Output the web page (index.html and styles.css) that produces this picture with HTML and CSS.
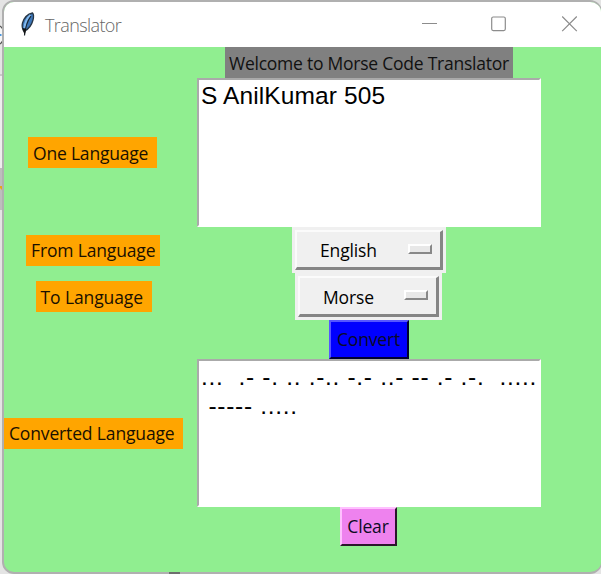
FILE: index.html
```html
<!DOCTYPE html>
<html lang="en">
<head>
<meta charset="utf-8">
<title>Translator</title>
<link rel="stylesheet" href="styles.css">
</head>
<body>
<svg class="backdrop" width="601" height="574" viewBox="0 0 601 574" aria-hidden="true">
  <path d="M0 75h4" stroke="#c8c8c8" stroke-width="2"/>
  <path d="M0 76h4v92h-4z" fill="#eee"/>
  <path d="M0 168h4v42h-4z" fill="#bdbdbd"/>
  <path d="M0 26q4 3 4 9t-4 9" fill="#f7f7f7" stroke="#555" stroke-width="1.3"/>
  <path d="M0 35h1.5" stroke="#1479d7" stroke-width="1.5"/>
  <path d="M0 186h4v10q-1-6-4-8z" fill="#e6a817"/>
</svg>
<div class="window">
  <header class="titlebar">
    <svg class="feather" width="16" height="25" viewBox="0 0 16 25">
      <path d="M12.5 1C8 2 4 6 2.500 11c-.8 3-.6 5.500 1.500 8.500C9 17 12 12 13 8c.8-3 .8-5.500-.5-7z" fill="#3d77b9" stroke="#273545" stroke-width="1.300"/>
      <path d="M10.500 3C7 6 5 11 4.500 16" fill="none" stroke="#83b9ee" stroke-width="2"/>
      <path d="M11 4C8 8 5.500 13 4.500 23.500" fill="none" stroke="#1c2630" stroke-width="1.200"/>
      <path d="M2.500 16l4 1-2 6z" fill="#161616"/>
    </svg>
    <span class="title">Translator</span>
    <svg class="controls" width="157" height="16" viewBox="0 0 157 16" fill="none" stroke="#8c8c8c" stroke-width="1.200">
      <path d="M0 7.500h15"/>
      <rect x="69.700" y="1" width="13.600" height="13.600" rx="1.500"/>
      <path d="M140.200.500l14.600 14.600M154.800.500l-14.600 14.600"/>
    </svg>
  </header>
  <main class="form">
    <h1 class="label heading">Welcome to Morse Code Translator</h1>
    <div class="label l-one">One Language</div>
    <div class="textbox"><div class="source">S AnilKumar 505</div></div>
    <div class="label l-from">From Language</div>
    <div class="option o-from"><div class="option-face"><span>English</span><i class="indicator"></i></div></div>
    <div class="label l-to">To Language</div>
    <div class="option o-to"><div class="option-face"><span>Morse</span><i class="indicator"></i></div></div>
    <button class="button convert">Convert</button>
    <div class="label l-converted">Converted Language</div>
    <div class="textbox"><div class="morse">...  .- -. .. .-.. -.- ..- -- .- .-.  .....
 ----- .....</div></div>
    <button class="button clear">Clear</button>
  </main>
</div>
<i class="edge-mark"></i>
</body>
</html>
```

FILE: styles.css
```css
* { box-sizing: border-box; }
body {
  margin: 0;
  width: 601px;
  height: 574px;
  overflow: hidden;
  background: #e4e4e4;
  font-family: "Open Sans", "Noto Sans", sans-serif;
  font-size: 17.5px;
  color: #000;
}
.backdrop { position: absolute; top: 0; left: 0; z-index: -1; }
/* Dark sliver showing through the window's bottom edge */
.edge-mark {
  position: absolute;
  left: 169px;
  top: 572px;
  width: 11px;
  height: 2px;
  background: #6e6e6e;
}
.window {
  width: 600px;
  height: 574px;
  margin-left: 2px;
  border: 2px solid #b0b0b0;
  border-right-width: 1px;
  border-radius: 12px;
  overflow: hidden;
  background: #90ee90;
}
.titlebar {
  display: flex;
  align-items: center;
  height: 45px;
  padding-left: 16px;
  background: #fff;
}
.feather { margin-top: -1px; }
.title {
  margin-left: 9px;
  font-size: 18px;
  font-weight: 300;
  letter-spacing: -0.6px;
  color: #666;
}
.controls { margin-left: auto; margin-right: 22px; margin-top: -2px; }
.form {
  display: grid;
  grid-template-columns: 179px 344px;
  grid-template-rows: 31px 149px 46px 47px 39px 148px 39px;
  column-gap: 14px;
  align-items: center;
  justify-items: center;
}
.label {
  display: flex;
  align-items: center;
  height: 31px;
  margin: 0;
  padding-left: 5px;
  background: #ffa500;
  font-size: 17.5px;
  font-weight: 400;
  line-height: 24px;
  white-space: nowrap;
  color: #1a1000;
}
.label, .option, .button { letter-spacing: -0.15px; }
.heading {
  grid-column: 2;
  width: 288px;
  padding-left: 4px;
  background: #808080;
  color: #111;
  letter-spacing: -0.24px;
}
.l-one { width: 129px; margin-right: 2px; letter-spacing: -0.2px; }
.l-from { width: 134px; margin-right: 1px; }
.l-to { width: 116px; letter-spacing: -0.1px; }
.l-converted { width: 179px; }
.textbox {
  width: 344px;
  height: 100%;
  border: 2px solid;
  border-color: #aaa #fff #fff #aaa;
  background: #fff;
  font-family: "Liberation Sans", Arial, sans-serif;
  font-size: 24.5px;
  line-height: 28.5px;
  white-space: pre;
  padding: 1px 0 0 2px;
}
.source { letter-spacing: 0.12px; margin-top: 1px; }
.morse { letter-spacing: 0.69px; margin-top: 1px; }
.option {
  height: 100%;
  padding: 3px;
  background: #f0f0f0;
}
.o-from { width: 154px; }
.o-to { width: 147px; margin-right: 1px; }
.option-face {
  display: flex;
  align-items: center;
  justify-content: space-between;
  height: 100%;
  padding: 1px 8px 0 23px;
  border: 3px solid;
  border-width: 2px 3px 3px 2px;
  border-color: #fbfbfb #858585 #858585 #fbfbfb;
}
.indicator {
  width: 24px;
  height: 10px;
  margin-top: -3px;
  border: 2px solid;
  border-color: #fff #888 #888 #fff;
  background: #e8e8e8;
}
.button {
  grid-column: 2;
  height: 39px;
  padding: 0 1px 1px 0;
  border: 2px solid;
  font: inherit;
  color: #0b0b25;
}
.convert {
  width: 80px;
  background: #00f;
  border-color: #5656ff #000030 #000030 #5656ff;
}
.clear {
  width: 57px;
  margin-right: 1px;
  background: #ee82ee;
  border-color: #ffc0ff #2b152b #2b152b #ffc0ff;
}
```
